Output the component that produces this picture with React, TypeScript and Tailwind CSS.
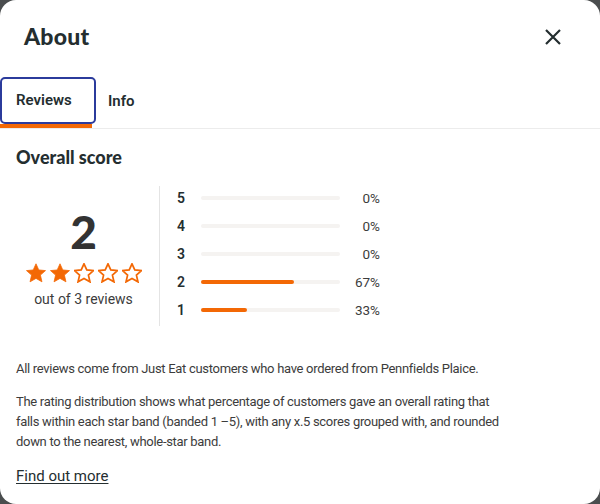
const rows = [
  { star: 5, pct: 0 },
  { star: 4, pct: 0 },
  { star: 3, pct: 0 },
  { star: 2, pct: 67 },
  { star: 1, pct: 33 },
];

function Star({ filled }: { filled: boolean }) {
  return (
    <svg width="20" height="20" viewBox="1.6 1.8 20.8 20.8">
      <path
        d="M12 2.6l2.9 6.4 7 .7-5.3 4.7 1.6 7-6.2-3.6-6.2 3.6 1.6-7L2.1 9.7l7-.7z"
        fill={filled ? "#f36805" : "none"}
        stroke="#f36805"
        strokeWidth={filled ? 0.8 : 1.8}
        strokeLinejoin="miter"
      />
    </svg>
  );
}

export default function App() {
  return (
    <div className="w-[600px] h-[504px] bg-[#4a4d4e]">
      <div className="w-full h-full bg-white rounded-[16px] overflow-hidden flex flex-col text-[#242e30] font-['Roboto',sans-serif]">
        <div className="flex items-center justify-between pl-6 pr-[38px] h-[76px] pb-[4px]">
          <h1 className="text-[23px] font-black font-['Lato',sans-serif] tracking-[0.2px]">About</h1>
          <svg width="18" height="18" viewBox="0 0 18 18" className="mt-[2px]">
            <path d="M2 2L16 16M16 2L2 16" stroke="#242e30" strokeWidth="2.2" />
          </svg>
        </div>

        <div className="flex items-end border-b border-[#ececec] mt-[1px]">
          <div className="relative">
            <div className="w-[96px] h-[47px] border-2 border-[#2b3b9c] rounded-[5px] flex items-center pl-[14px] text-[15px] font-semibold">
              Reviews
            </div>
            <div className="h-[4px] w-[92px] bg-[#f36805]"></div>
          </div>
          <div className="h-[51px] flex items-start pt-[13px] pl-[12px] text-[15px] font-semibold">Info</div>
        </div>

        <div className="px-4 pt-[17px]">
          <h2 className="text-[18px] font-black font-['Lato',sans-serif] leading-[22px]">Overall score</h2>

          <div className="flex mt-[18px] h-[140px]">
            <div className="w-[144px] h-[140px] border-r border-[#e4e4e4] flex flex-col items-center justify-center pt-[6px] pr-[8px]">
              <div className="text-[46px] leading-[46px] font-black font-['Lato',sans-serif] text-[#333]">2</div>
              <div className="flex gap-[4px] mt-[8px]">
                <Star filled />
                <Star filled />
                <Star filled={false} />
                <Star filled={false} />
                <Star filled={false} />
              </div>
              <div className="text-[14px] text-[#3c3c3c] mt-[6px]">out of 3 reviews</div>
            </div>

            <div className="flex flex-col pl-[17px] h-[140px] justify-center gap-[8px] -mt-[2px]">
              {rows.map((r) => (
                <div key={r.star} className="flex items-center h-[20px]">
                  <span className="w-[24px] text-[14px] font-semibold">{r.star}</span>
                  <div className="w-[139px] h-[4px] rounded-full bg-[#f5f3f1]">
                    <div className="h-full rounded-full bg-[#f36805]" style={{ width: `${r.pct}%` }}></div>
                  </div>
                  <span className="w-[40px] text-right text-[13.5px] text-[#3c3c3c]">{r.pct}%</span>
                </div>
              ))}
            </div>
          </div>

          <p className="text-[13px] leading-[20px] text-[#3c3c3c] mt-[33px] tracking-[-0.3px]">
            All reviews come from Just Eat customers who have ordered from Pennfields Plaice.
          </p>
          <p className="text-[13px] leading-[20px] text-[#3c3c3c] mt-[13px] tracking-[-0.3px] whitespace-nowrap">
            The rating distribution shows what percentage of customers gave an overall rating that
            <br />
            falls within each star band (banded 1 –5), with any x.5 scores grouped with, and rounded
            <br />
            down to the nearest, whole-star band.
          </p>
          <a className="inline-block mt-[13px] text-[15px] underline underline-offset-2 text-[#242e30]">Find out more</a>
        </div>
      </div>
    </div>
  );
}
